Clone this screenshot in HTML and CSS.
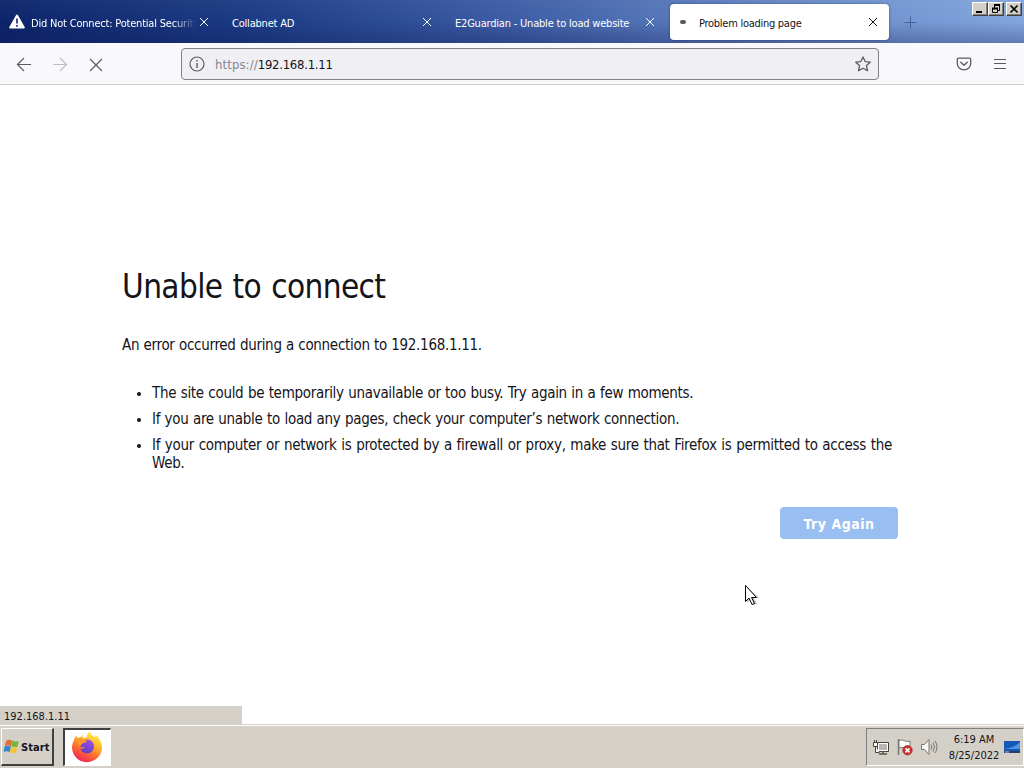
FILE: index.html
```
<!DOCTYPE html>
<html lang="en">
<head>
  <meta charset="UTF-8">
  <title>Problem loading page</title>
  <link rel="stylesheet" href="styles.css">
</head>
<body>
  <div class="tabbar">
    <div class="tab">
      <svg class="warn" width="16" height="16" viewBox="0 0 16 16"><path d="M8 1.5 14.800 13.500H1.200z" fill="#fff" stroke="#fff" stroke-width="2" stroke-linejoin="round"/><path d="M8 4.500v5M8 11v1.800" stroke="#173177" stroke-width="1.7"/></svg>
      <span class="label fade">Did Not Connect: Potential Security</span>
      <svg class="close" width="10" height="10" viewBox="0 0 10 10"><path d="M1 1l8 8M9 1l-8 8"/></svg>
    </div>
    <div class="tab">
      <span class="label">Collabnet AD</span>
      <svg class="close" width="10" height="10" viewBox="0 0 10 10"><path d="M1 1l8 8M9 1l-8 8"/></svg>
    </div>
    <div class="tab">
      <span class="label">E2Guardian - Unable to load website</span>
      <svg class="close" width="10" height="10" viewBox="0 0 10 10"><path d="M1 1l8 8M9 1l-8 8"/></svg>
    </div>
    <div class="tab active">
      <span class="throbber"></span>
      <span class="label">Problem loading page</span>
      <svg class="close" width="10" height="10" viewBox="0 0 10 10"><path d="M1 1l8 8M9 1l-8 8"/></svg>
    </div>
    <svg class="newtab" width="13" height="13" viewBox="0 0 13 13"><path d="M6.5 .5v12M.5 6.5h12" stroke="#46629b" fill="none"/></svg>
    <div class="winbuttons">
      <span class="winbtn"><svg width="14" height="12"><path d="M3 9h6" stroke="#000" stroke-width="2"/></svg></span>
      <span class="winbtn"><svg width="14" height="12"><path d="M5.5 5V2.5h5v5H9M5 2.5h6M3.5 5.500h5v4h-5zM3 5.500h6" fill="none" stroke="#000"/><path d="M5 2h6M3 5.500h6" stroke="#000" stroke-width="2"/></svg></span>
      <span class="winbtn last"><svg width="14" height="12"><path d="M3.500 2.500l7 7M10.500 2.500l-7 7" stroke="#000" stroke-width="1.700"/></svg></span>
    </div>
  </div>

  <div class="toolbar">
    <svg class="nav" width="16" height="16" viewBox="0 0 16 16"><path d="M15 7.500H1.500M8 1 1.500 7.500 8 14"/></svg>
    <svg class="nav disabled" width="16" height="16" viewBox="0 0 16 16"><path d="M1 7.500h13.500M8 1 14.500 7.500 8 14"/></svg>
    <svg class="nav" width="16" height="16" viewBox="0 0 16 16"><path d="M2 2l12 12M14 2 2 14"/></svg>
    <div class="urlbar">
      <svg width="16" height="16" viewBox="0 0 16 16"><circle cx="8" cy="8" r="7" fill="none" stroke="#5b5b66" stroke-width="1.200"/><path d="M8 7v5M8 4v1.500" stroke="#5b5b66" stroke-width="1.400"/></svg>
      <span class="url"><span class="scheme">https://</span>192.168.1.11</span>
      <svg class="star" width="16" height="16" viewBox="0 0 16 16"><path d="M8 .9l2.150 4.650 5.100.6-3.800 3.450 1.050 5.200L8 12.300l-4.500 2.500 1.050-5.200L.75 6.150l5.100-.6z" fill="none" stroke="#5b5b66" stroke-width="1.300" stroke-linejoin="round"/></svg>
    </div>
    <svg class="pocket" width="16" height="16" viewBox="0 0 16 16"><path d="M2.600 2.200h10.800q1.300 0 1.300 1.300V7.500a6.700 6.300 0 0 1-13.400 0V3.500q0-1.300 1.300-1.300zM4.700 6.200 8 9.300l3.300-3.100" fill="none" stroke="#5b5b66" stroke-width="1.300" stroke-linecap="round" stroke-linejoin="round"/></svg>
    <svg class="menu" width="14" height="12" viewBox="0 0 14 12"><path d="M1 1.500h12M1 5.500h12M1 10.500h12" stroke="#5b5b66" stroke-width="1.200"/></svg>
  </div>

  <div class="page">
    <div class="error">
      <h1>Unable to connect</h1>
      <p>An error occurred during a connection to 192.168.1.11.</p>
      <ul>
        <li>The site could be temporarily unavailable or too busy. Try again in a few moments.</li>
        <li>If you are unable to load any pages, check your computer’s network connection.</li>
        <li class="long">If your computer or network is protected by a firewall or proxy, make sure that Firefox is permitted to access the Web.</li>
      </ul>
      <button class="retry">Try Again</button>
    </div>
    <div class="status">192.168.1.11</div>
    <svg class="cursor" width="17" height="24" viewBox="0 0 17 24">
      <path class="shadow" d="M3 3v16l4-4 3 6 3-1-3-6h5z"/>
      <path d="M1.500 1.500v16l3.500-3.500 3 6.500 2.500-1-3-6h5z" fill="#fff" stroke="#000"/>
    </svg>
  </div>

  <div class="taskbar">
    <div class="start">
      <svg width="17" height="17" viewBox="0 0 17 17">
        <path d="M3 3q3-2 6-.5L8 8Q5 6.500 1.800 8z" fill="#e66a32"/>
        <path d="M9.200 2.600q3 1.500 6.500.4L14.500 8.500q-3 1.200-6.300-.4z" fill="#76b63b"/>
        <path d="M1.600 8.300Q5 7 7.900 8.400L6.700 14Q4 12.500.6 13.800z" fill="#2f87d0"/>
        <path d="M8.100 8.600q3 1.500 6.300.5L13 14.600q-3 1.300-6.100-.4z" fill="#f4c637"/>
      </svg>
      <span>Start</span>
    </div>
    <div class="task">
      <svg width="32" height="32" viewBox="0 0 32 32">
        <defs>
          <linearGradient id="fire" x1=".8" y1=".05" x2=".3" y2="1"><stop offset="0" stop-color="#fff04a"/><stop offset=".35" stop-color="#ffb52c"/><stop offset=".65" stop-color="#ff6a30"/><stop offset="1" stop-color="#ee1f60"/></linearGradient>
          <linearGradient id="globe" x1=".7" y1="0" x2=".3" y2="1"><stop offset="0" stop-color="#a34be8"/><stop offset="1" stop-color="#5542c4"/></linearGradient>
        </defs>
        <path d="M3 9q.7-3 2.300-4.500L6.500 7q1-.5 2.500-.3l3-3-.4 3.300 4-.5Q15.500 3 18.500.8q1.500 3.400 5 5.200L25 4q5.500 5 6 11.800A15 14.800 0 1 1 3 9z" fill="url(#fire)"/>
        <circle cx="16" cy="15.500" r="7" fill="url(#globe)"/>
        <path d="M4.500 8.500Q8 5.500 11.500 7.500q1.300 2 4.500 2.300 0 1.400-3.500 2.300-2 .6-3 2.900Q8 14 7.500 11z" fill="#ff9a2a"/>
        <path d="M8.500 15q2.500 1.800 6 1-1.500 2-4.800 2z" fill="#ff7b2c"/>
      </svg>
    </div>
    <div class="tray">
      <svg width="18" height="18" viewBox="0 0 18 18"><path d="M5.500 4.500h11v9h-11z" fill="#b8b6b0" stroke="#44433f"/><path d="M6.500 5.500h9v7h-9z" fill="none" stroke="#fff"/><path d="M7 16h8M11 13v3" stroke="#55544f" stroke-width="1.500"/><path d="M1.500 4.500h4v4h-4zM2.500 2v2.500M4.500 2v2.500M3.500 8.500v6h4" fill="#fff" stroke="#44433f"/></svg>
      <svg width="18" height="18" viewBox="0 0 18 18"><path d="M2.500 1v16" stroke="#777" stroke-width="1.500"/><path d="M3 2.500q3-1.500 6 .5 2 1 5 0v7q-3 1-5 0-3-1.500-6 0z" fill="#fff" stroke="#777"/><circle cx="11.500" cy="12.300" r="4.700" fill="#cf2b2b" stroke="#a12222" stroke-width=".7"/><path d="M9.500 10.300l4 4M13.500 10.300l-4 4" stroke="#fff" stroke-width="1.700"/></svg>
      <svg width="18" height="18" viewBox="0 0 18 18"><path d="M1.500 6.500h3l4.500-5v15l-4.500-5h-3z" fill="#f7f7f5" stroke="#777"/><path d="M11 6.500q1.500 2.500 0 5M13 4.500q3 4.500 0 9M15 2.800q4 6.200 0 12.400" fill="none" stroke="#777"/></svg>
      <div class="clock"><span>6:19 AM</span><span>8/25/2022</span></div>
      <svg class="desk" width="16" height="14" viewBox="0 0 16 14"><path d="M0 1h16v10H0z" fill="#1757b5"/><path d="M0 9Q10 8 16 2v7z" fill="#4c95e5"/><path d="M0 11h16v2H0z" fill="#263d64"/><path d="M1 12h4" stroke="#bcd"/></svg>
    </div>
  </div>
</body>
</html>
```
FILE: styles.css
```
* { box-sizing: border-box; }
body { margin: 0; width: 1024px; height: 768px; overflow: hidden; display: flex; flex-direction: column; font-family: "DejaVu Sans Condensed", "DejaVu Sans", sans-serif; font-stretch: condensed; font-size: 11px; color: #15141a; background: #fff; }
svg { display: block; flex: none; }

.tabbar { height: 43px; flex: none; display: flex; align-items: flex-start; gap: 4px; padding: 4px 0 0 1px; background: linear-gradient(to bottom, rgba(255,255,255,.04), rgba(0,0,40,0) 50%, rgba(20,25,80,.3)), linear-gradient(to right, #0c246a, #1c3b85 25%, #3c5ca5 50%, #6486c4 75%, #82a6de); }
.tab { width: 219px; height: 36px; flex: none; display: flex; align-items: center; padding: 0 11px 0 8px; color: #fff; border-radius: 4px; }
.tab .label { flex: 1; white-space: nowrap; letter-spacing: -.2px; line-height: 16px; padding-top: 3px; }
.tab .fade { -webkit-mask-image: linear-gradient(to left, transparent 3px, #000 26px); mask-image: linear-gradient(to left, transparent 3px, #000 26px); }
.warn { margin-right: 6px; }
.close { fill: none; stroke: currentColor; stroke-width: 1; }
.active { background: #fff; color: #15141a; box-shadow: 0 0 3px rgba(20,30,80,.5); }
.active .label { letter-spacing: -.27px; }
.throbber { width: 6px; height: 4px; border-radius: 2px; background: #5b5b66; margin: 0 13px 0 2px; }
.newtab { margin: 12px 0 0 11px; }
.winbuttons { display: flex; margin: -2px 2px 0 auto; }
.winbtn { width: 16px; height: 14px; background: #d4d0c8; border: 1px solid; border-color: #fff #404040 #404040 #fff; box-shadow: inset -1px -1px #808080; }
.winbtn.last { margin-left: 2px; }

.toolbar { height: 42px; flex: none; display: flex; align-items: center; padding: 1px 17px 0 16px; background: #f9f9fb; border-bottom: 1px solid #ccccd1; }
.nav { fill: none; stroke: #5b5b66; stroke-width: 1.2; margin: 2px 20px 0 0; }
.disabled { stroke: #bdbdc2; }
.urlbar { width: 698px; height: 32px; display: flex; align-items: center; margin-left: 57px; padding: 0 7px; border: 1px solid #808087; border-radius: 4px; background: #f0f0f4; }
.url { flex: 1; margin-left: 10px; font-size: 13px; letter-spacing: -.27px; }
.scheme { color: #86868d; letter-spacing: .1px; }
.pocket { margin-left: auto; }
.menu { margin-left: 21px; }

.page { position: relative; flex: 1; display: flex; flex-direction: column; justify-content: space-between; }
.error { width: 780px; margin: 179px 0 0 122px; display: flex; flex-direction: column; font-size: 15px; line-height: 18px; }
h1 { font-size: 33px; font-weight: normal; line-height: 46px; letter-spacing: -.6px; word-spacing: 1.2px; margin: 0 0 26px; }
p { margin: 0 0 30px; letter-spacing: -.3px; word-spacing: .35px; }
ul { margin: 0; padding-left: 30px; }
li { margin-bottom: 8px; letter-spacing: -.3px; word-spacing: .5px; }
li.long { word-spacing: .7px; }
li::marker { font-size: 13px; }
.retry { align-self: flex-end; width: 118px; height: 32px; margin: 27px 4px 0 0; padding: 1px 0 0; border: 0; border-radius: 4px; background: #99bff2; color: #fff; font: bold 14px "DejaVu Sans Condensed", "DejaVu Sans", sans-serif; font-stretch: condensed; letter-spacing: .5px; }
.status { width: 242px; height: 18px; padding: 3px 4px 0; line-height: 15px; background: #d4d0c8; }
.cursor { position: absolute; left: 744px; top: 499px; }
.shadow { fill: rgba(0,0,0,.25); }

.taskbar { height: 44px; flex: none; display: flex; align-items: flex-start; padding-top: 3px; background: #d4d0c8; border-top: 1px solid #d4d0c8; box-shadow: inset 0 1px #fff; }
.start { width: 53px; height: 38px; margin-left: 1px; display: flex; align-items: center; gap: 1px; padding-left: 1px; border: solid; border-width: 1px 2px 2px 1px; border-color: #fff #404040 #404040 #fff; font-weight: bold; letter-spacing: .1px; }
.start span { padding-top: 2px; }
.task { width: 48px; height: 38px; margin-left: 9px; padding: 1px 0 0 6px; background: #fff; border: solid; border-width: 2px 1px 1px 2px; border-color: #404040 #fff #fff #404040; }
.tray { width: 158px; height: 38px; margin-left: auto; display: flex; align-items: center; gap: 6px; padding-left: 5px; border: 1px solid; border-color: #808080 #fff #fff #808080; }
.clock { width: 60px; display: flex; flex-direction: column; align-items: center; padding-top: 1px; line-height: 16px; letter-spacing: -.05px; }
.desk { margin-left: -6px; }
```
